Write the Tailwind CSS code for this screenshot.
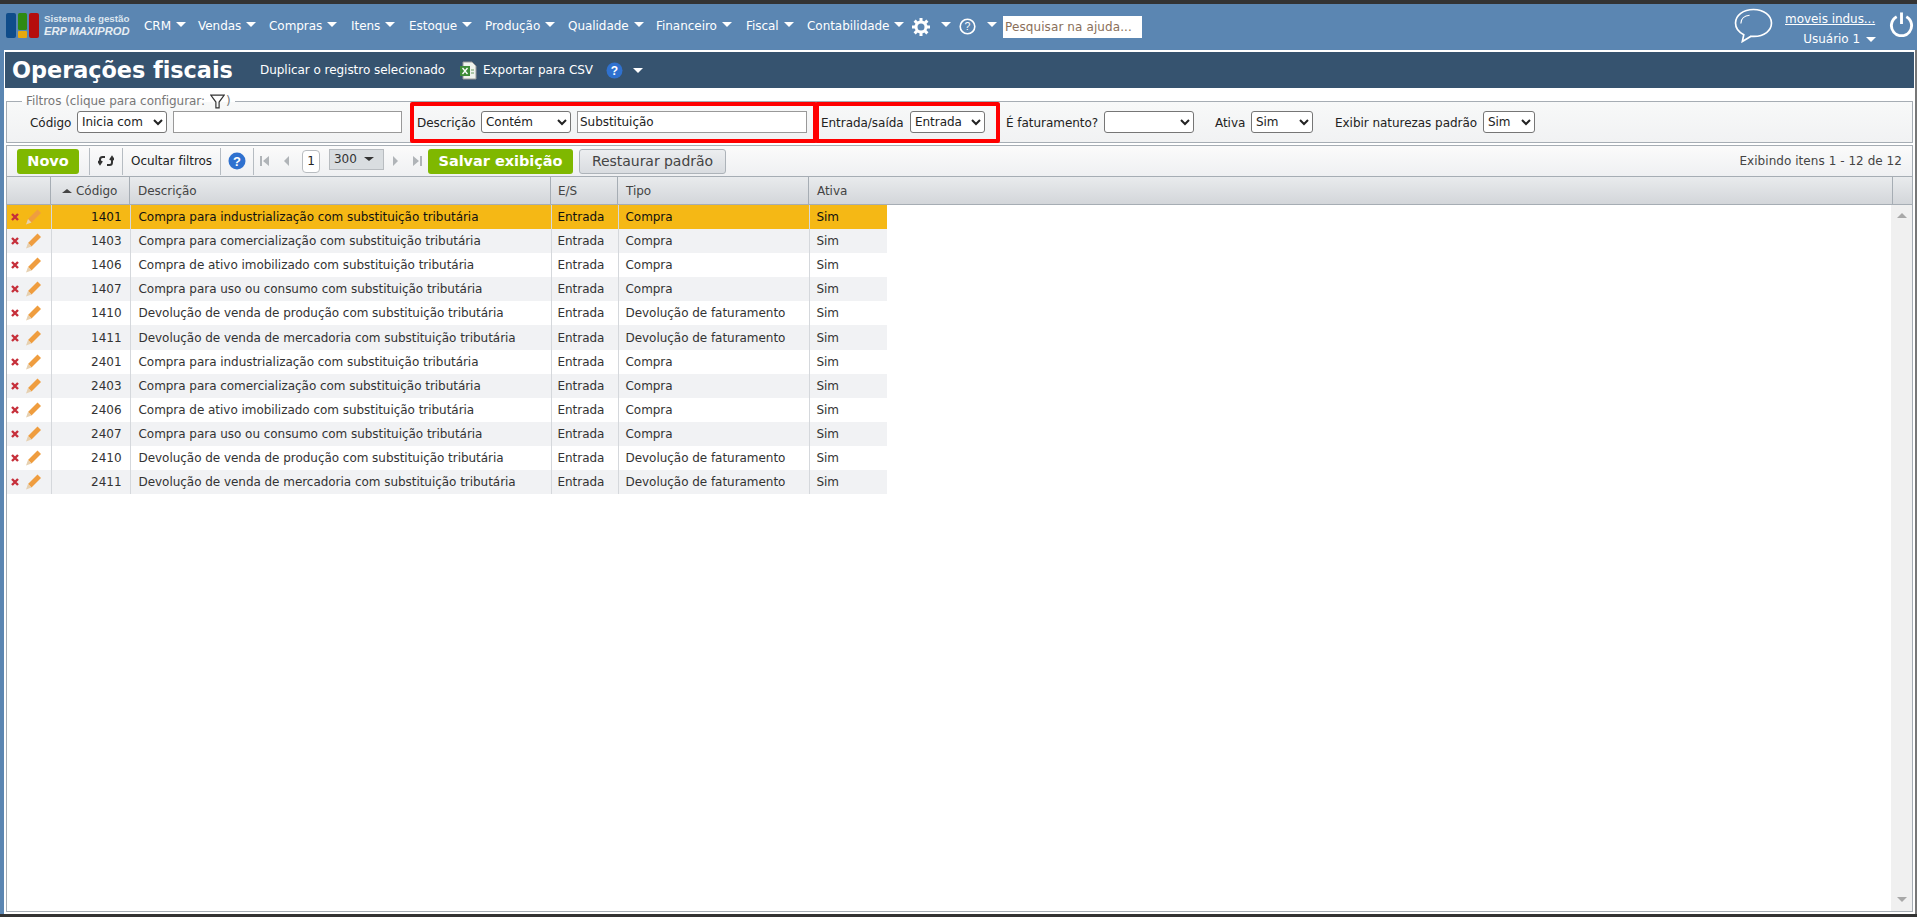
<!DOCTYPE html>
<html lang="pt-BR"><head><meta charset="utf-8"><title>Operações fiscais</title>
<script src="https://cdn.jsdelivr.net/npm/@tailwindcss/browser@4"></script></head>
<body class="w-[1917px] h-[917px] overflow-hidden bg-[#333] font-['DejaVu_Sans',sans-serif] text-[12px] tracking-[-0.04px] text-[#333]">
<div class="h-[4px] bg-[#333]"></div>
<header class="h-[46px] bg-[#5b86b2] flex items-start text-white relative">
  <div class="flex w-[137px] pl-[6px] pt-[9px] h-[46px] shrink-0">
    <svg width="33" height="25" viewBox="0 0 33 25"><rect x="0" y="0" width="10" height="25" rx="2" fill="#0f4c8a"/><rect x="12" y="0" width="9" height="17" rx="1.5" fill="#2f8a12"/><rect x="12" y="18" width="9" height="7" rx="1" fill="#e8a90f"/><rect x="23" y="0" width="10" height="25" rx="2" fill="#b50d0d"/></svg>
    <div class="ml-[5px] leading-none"><div class="text-[9.800px] font-bold text-[#dbe5ee] mt-[1px] whitespace-nowrap font-['Liberation_Sans',sans-serif]">Sistema de gestão</div><div class="text-[11.200px] italic font-bold text-[#e6edf3] mt-[2px] whitespace-nowrap font-['Liberation_Sans',sans-serif]">ERP MAXIPROD</div></div>
  </div>
  <nav class="flex items-center h-[42px] pt-[3px] pl-[7px] whitespace-nowrap">
    <span class="w-[54px] pb-[2px] flex items-center gap-[5px]">CRM<i class="w-0 h-0 mb-[2px] border-x-[5px] border-x-transparent border-t-[5px] border-t-white"></i></span>
    <span class="w-[71px] pb-[2px] flex items-center gap-[5px]">Vendas<i class="w-0 h-0 mb-[2px] border-x-[5px] border-x-transparent border-t-[5px] border-t-white"></i></span>
    <span class="w-[82px] pb-[2px] flex items-center gap-[5px]">Compras<i class="w-0 h-0 mb-[2px] border-x-[5px] border-x-transparent border-t-[5px] border-t-white"></i></span>
    <span class="w-[58px] pb-[2px] flex items-center gap-[5px]">Itens<i class="w-0 h-0 mb-[2px] border-x-[5px] border-x-transparent border-t-[5px] border-t-white"></i></span>
    <span class="w-[76px] pb-[2px] flex items-center gap-[5px]">Estoque<i class="w-0 h-0 mb-[2px] border-x-[5px] border-x-transparent border-t-[5px] border-t-white"></i></span>
    <span class="w-[83px] pb-[2px] flex items-center gap-[5px]">Produção<i class="w-0 h-0 mb-[2px] border-x-[5px] border-x-transparent border-t-[5px] border-t-white"></i></span>
    <span class="w-[88px] pb-[2px] flex items-center gap-[5px]">Qualidade<i class="w-0 h-0 mb-[2px] border-x-[5px] border-x-transparent border-t-[5px] border-t-white"></i></span>
    <span class="w-[90px] pb-[2px] flex items-center gap-[5px]">Financeiro<i class="w-0 h-0 mb-[2px] border-x-[5px] border-x-transparent border-t-[5px] border-t-white"></i></span>
    <span class="w-[61px] pb-[2px] flex items-center gap-[5px]">Fiscal<i class="w-0 h-0 mb-[2px] border-x-[5px] border-x-transparent border-t-[5px] border-t-white"></i></span>
    <span class="w-[105px] pb-[2px] flex items-center gap-[5px]">Contabilidade<i class="w-0 h-0 mb-[2px] border-x-[5px] border-x-transparent border-t-[5px] border-t-white"></i></span>
    <svg class="w-[18px] h-[18px] mr-[11px]" viewBox="0 0 18 18"><circle cx="9" cy="9" r="5" fill="none" stroke="#fff" stroke-width="3"/><path d="M9 0v4M9 14v4M0 9h4M14 9h4M2.600 2.600l2.800 2.800M12.600 12.600l2.800 2.800M2.600 15.400l2.800-2.800M12.600 5.400l2.800-2.800" stroke="#fff" stroke-width="3"/></svg>
    <i class="w-0 h-0 mb-[4px] border-x-[5px] border-x-transparent border-t-[5px] border-t-white mr-[8px]"></i>
    <svg class="w-[17px] h-[17px] mr-[11px]" viewBox="0 0 17 17"><circle cx="8.500" cy="8.500" r="7.300" fill="none" stroke="#fff" stroke-width="1.600"/><text x="8.500" y="12.300" text-anchor="middle" font-size="10.500" fill="#fff" font-family="Liberation Sans">?</text></svg>
    <i class="w-0 h-0 mb-[4px] border-x-[5px] border-x-transparent border-t-[5px] border-t-white mr-[6px]"></i>
    <div class="w-[139px] h-[22px] bg-white text-[#8a6f5a] flex items-center pl-[2px] tracking-[0.1px]">Pesquisar na ajuda...</div>
  </nav>
  <div class="ml-auto flex h-[46px] shrink-0 mr-[3px]">
    <svg class="w-[39px] h-[35px] mt-[4px]" viewBox="0 0 40 36"><path d="M20 1.500C9.500 1.500 1.500 7.500 1.500 15.500c0 5.500 3.500 9.500 8.500 12l-1.500 7 9-5.500c1 .2 2 .2 3 .2 10.500 0 18-6 18-13.700S30.500 1.500 20 1.500z" fill="none" stroke="#fff" stroke-width="1.700"/><path d="M7 16c0-5 4-8 9-8.500" fill="none" stroke="#fff" stroke-width="1.200"/></svg>
    <div class="ml-[12px] w-[104px] pr-[13px]"><div class="underline mt-[6px] whitespace-nowrap">moveis indus...</div><div class="mt-[2px] flex items-center justify-end gap-[6px] whitespace-nowrap">Usuário 1<i class="w-0 h-0 border-x-[5px] border-x-transparent border-t-[5px] border-t-white"></i></div></div>
    <svg class="w-[25px] h-[26px] mt-[7px]" viewBox="0 0 26 26"><path d="M8 5.500a10.500 10.500 0 1 0 10 0" fill="none" stroke="#fff" stroke-width="3"/><path d="M13 1v12" stroke="#fff" stroke-width="3"/></svg>
  </div>
</header>
<div class="flex h-[864px] bg-[#5b86b2]">
<main class="w-[1911px] ml-[4px] bg-white flex flex-col relative">
  <div class="h-[2px]"></div>
  <div class="h-[36px] ml-[1px] w-[1909px] bg-[#36536f] text-white flex items-center shrink-0">
    <h1 class="text-[22.400px] font-bold leading-none ml-[7px] w-[248px] whitespace-nowrap">Operações fiscais</h1>
    <span class="whitespace-nowrap w-[200px] pb-[1px]">Duplicar o registro selecionado</span>
    <svg class="w-[17px] h-[19px]" viewBox="0 0 17 19"><path d="M3 1h9l4 4v13H3z" fill="#eef2ec" stroke="#999"/><rect x="0" y="5" width="10" height="10" fill="#3d8b37"/><path d="M2.500 7l5 6M7.500 7l-5 6" stroke="#fff" stroke-width="1.300"/><path d="M11 9h3M11 12h3" stroke="#6a9c63"/></svg>
    <span class="ml-[6px] whitespace-nowrap w-[123px]">Exportar para CSV</span>
    <svg class="w-[17px] h-[17px]" viewBox="0 0 17 17"><circle cx="8.500" cy="8.500" r="8" fill="#2f71cf"/><text x="8.500" y="12.700" text-anchor="middle" font-size="12" font-weight="700" fill="#fff" font-family="Liberation Sans">?</text></svg>
    <i class="ml-[10px] w-0 h-0 border-x-[5px] border-x-transparent border-t-[5px] border-t-white"></i>
  </div>
  <fieldset class="mt-[6px] ml-[2px] w-[1907px] h-[49px] border border-[#a6adb4] bg-gradient-to-b from-[#f8f9f9] to-[#f1f2f3] shrink-0 px-0">
    <legend class="ml-[15px] px-[4px] text-[#777] h-[14px] leading-[14px] flex items-center whitespace-nowrap">Filtros (clique para configurar:<svg class="w-[15px] h-[15px] ml-[5px] mr-[1px]" viewBox="0 0 14 14"><path d="M.7 1h12.600L8.500 7.500V13H5.500V7.500z" fill="none" stroke="#333" stroke-width="1.100"/></svg>)</legend>
    <div class="flex items-center h-[22px] mt-[3px] text-[#222] whitespace-nowrap">
      <span class="ml-[23px] w-[47px] pt-[2px]">Código</span>
      <select class="w-[90px] h-[22px] border border-[#767676] rounded-[3px] bg-white"><option>Inicia com</option></select>
      <input class="ml-[6px] w-[229px] h-[22px] border border-[#999] bg-white" value="">
      <span class="ml-[15px] w-[64px] pt-[2px]">Descrição</span>
      <select class="w-[90px] h-[22px] border border-[#767676] rounded-[3px] bg-white"><option>Contém</option></select>
      <input class="ml-[6px] w-[230px] h-[22px] border border-[#999] bg-white pl-[2px] text-[#222]" value="Substituição">
      <span class="ml-[14px] w-[89px] pt-[2px]">Entrada/saída</span>
      <select class="w-[75px] h-[22px] border border-[#767676] rounded-[3px] bg-white"><option>Entrada</option></select>
      <span class="ml-[21px] w-[98px] pt-[2px]">É faturamento?</span>
      <select class="w-[90px] h-[22px] border border-[#767676] rounded-[3px] bg-white"><option></option></select>
      <span class="ml-[21px] w-[36px] pt-[2px]">Ativa</span>
      <select class="w-[62px] h-[22px] border border-[#767676] rounded-[3px] bg-white"><option>Sim</option></select>
      <span class="ml-[22px] w-[148px] pt-[2px]">Exibir naturezas padrão</span>
      <select class="w-[52px] h-[22px] border border-[#767676] rounded-[3px] bg-white"><option>Sim</option></select>
    </div>
  </fieldset>
  <div class="absolute left-[406px] top-[52px] w-[407px] h-[41px] border-[4px] border-[#ff0000] rounded-[2px]"></div>
  <div class="absolute left-[811px] top-[52px] w-[185px] h-[41px] border-[4px] border-[#ff0000] rounded-[2px]"></div>
  <section class="mt-[2px] ml-[2px] w-[1907px] h-[767px] border border-[#a6adb4] flex flex-col shrink-0">
    <div class="h-[31px] bg-gradient-to-b from-[#fbfbfb] to-[#eff0f2] flex items-center shrink-0 border-b border-[#a6adb4] relative whitespace-nowrap">
      <button class="ml-[10px] w-[62px] h-[25px] rounded-[3px] bg-[#7fb800] text-white font-bold text-[14.500px] leading-none">Novo</button>
      <i class="ml-[10px] w-px h-[27px] bg-[#b6bcc2]"></i>
      <svg class="ml-[8px] w-[16px] h-[14px]" viewBox="0 0 16 14"><path d="M7 3H4.500C3 3 2 4 2 5.500V9M0 7l2 3 2-3M9 11h2.500C13 11 14 10 14 8.500V4M12 6l2-3 2 3" fill="none" stroke="#333" stroke-width="2"/></svg>
      <i class="ml-[8px] w-px h-[27px] bg-[#b6bcc2]"></i>
      <span class="ml-[8px] w-[89px] text-[#222]">Ocultar filtros</span>
      <i class="w-px h-[27px] bg-[#b6bcc2]"></i>
      <svg class="ml-[7px] w-[18px] h-[18px]" viewBox="0 0 18 18"><circle cx="9" cy="9" r="8.500" fill="#2f71cf"/><text x="9" y="13.500" text-anchor="middle" font-size="13" font-weight="700" fill="#fff" font-family="Liberation Sans">?</text></svg>
      <i class="ml-[7px] w-px h-[27px] bg-[#b6bcc2]"></i>
      <svg class="ml-[6px] w-[9px] h-[10px]" viewBox="0 0 9 10"><path d="M0 0h2v10H0zM9 0v10L3 5z" fill="#b0b4b8"/></svg>
      <svg class="ml-[15px] w-[5px] h-[10px]" viewBox="0 0 5 10"><path d="M5 0v10L0 5z" fill="#b0b4b8"/></svg>
      <span class="ml-[13px] w-[18px] h-[23px] border border-[#b8bcc0] rounded-[4px] bg-white flex items-center justify-center text-[#222]">1</span>
      <div class="ml-[9px] w-[55px] h-[21px] mb-[4px] bg-[#d9dde0] border border-[#b8bcc0] flex items-center justify-between pl-[4px] pr-[9px] text-[#333]">300<i class="w-0 h-0 border-x-[5px] border-x-transparent border-t-[4px] border-t-[#333]"></i></div>
      <svg class="ml-[9px] w-[5px] h-[10px]" viewBox="0 0 5 10"><path d="M0 0v10l5-5z" fill="#b0b4b8"/></svg>
      <svg class="ml-[15px] w-[9px] h-[10px]" viewBox="0 0 9 10"><path d="M7 0h2v10H7zM0 0v10l6-5z" fill="#b0b4b8"/></svg>
      <button class="ml-[6px] w-[145px] h-[25px] rounded-[3px] bg-[#7fb800] text-white font-bold text-[14.500px] leading-none">Salvar exibição</button>
      <button class="ml-[6px] w-[147px] h-[25px] rounded-[3px] border border-[#adb3b9] bg-gradient-to-b from-[#eceef0] to-[#d9dce0] text-[#444] text-[14px] leading-none">Restaurar padrão</button>
      <span class="ml-auto mr-[10px] text-[#444] tracking-[0.05px]">Exibindo itens 1 - 12 de 12</span>
    </div>
    <div class="h-[28px] bg-gradient-to-b from-[#e9ebed] to-[#d3d6da] flex text-[#444] shrink-0 border-b border-[#a6adb4] leading-[28px]">
      <div class="w-[44px] border-r border-[#a6adb4]"></div>
      <div class="w-[79px] border-r border-[#a6adb4] flex items-center pl-[11px]"><i class="w-0 h-0 border-x-[5px] border-x-transparent border-b-[4px] border-b-[#444] mr-[4px]"></i>Código</div>
      <div class="w-[421px] border-r border-[#a6adb4] pl-[8px]">Descrição</div>
      <div class="w-[67px] border-r border-[#a6adb4] pl-[7px]">E/S</div>
      <div class="w-[191px] border-r border-[#a6adb4] pl-[8px]">Tipo</div>
      <div class="w-[1084px] border-r border-[#a6adb4] pl-[8px]">Ativa</div>
    </div>
    <div class="flex flex-1 min-h-0">
      <table class="w-[880px] h-fit table-fixed border-collapse self-start text-[#333] whitespace-nowrap">
        <colgroup><col class="w-[44px]"><col class="w-[79px]"><col class="w-[421px]"><col class="w-[67px]"><col class="w-[191px]"><col class="w-[78px]"></colgroup>
        <tbody>
          <tr class="h-[24.100px] bg-[#f5b815] text-[#111]"><td class="border-r border-[#d5d8dc]"><div class="flex items-center pl-[4px] gap-[7px]"><svg class="w-[8px] h-[8px]" viewBox="0 0 8 8"><path d="M1 1l6 6M7 1L1 7" stroke="#c62f3a" stroke-width="2.400"/></svg><svg class="w-[15px] h-[16px]" viewBox="0 0 15 16"><path d="M11.500.5l3.500 3.500-9.500 9.500L2 10z" fill="#ef9d3f"/><path d="M2 10l3.500 3.500L0 15.500z" fill="#e6d0b0"/></svg></div></td><td class="border-r border-[#d5d8dc] text-right pr-[8px]">1401</td><td class="border-r border-[#d5d8dc] pl-[8px]">Compra para industrialização com substituição tributária</td><td class="border-r border-[#d5d8dc] pl-[6px]">Entrada</td><td class="border-r border-[#d5d8dc] pl-[7px]">Compra</td><td class="pl-[7px]">Sim</td></tr>
          <tr class="h-[24.100px] bg-[#f1f2f4]"><td class="border-r border-[#d5d8dc]"><div class="flex items-center pl-[4px] gap-[7px]"><svg class="w-[8px] h-[8px]" viewBox="0 0 8 8"><path d="M1 1l6 6M7 1L1 7" stroke="#c62f3a" stroke-width="2.400"/></svg><svg class="w-[15px] h-[16px]" viewBox="0 0 15 16"><path d="M11.500.5l3.500 3.500-9.500 9.500L2 10z" fill="#ef9d3f"/><path d="M2 10l3.500 3.500L0 15.500z" fill="#e6d0b0"/></svg></div></td><td class="border-r border-[#d5d8dc] text-right pr-[8px]">1403</td><td class="border-r border-[#d5d8dc] pl-[8px]">Compra para comercialização com substituição tributária</td><td class="border-r border-[#d5d8dc] pl-[6px]">Entrada</td><td class="border-r border-[#d5d8dc] pl-[7px]">Compra</td><td class="pl-[7px]">Sim</td></tr>
          <tr class="h-[24.100px] bg-white"><td class="border-r border-[#d5d8dc]"><div class="flex items-center pl-[4px] gap-[7px]"><svg class="w-[8px] h-[8px]" viewBox="0 0 8 8"><path d="M1 1l6 6M7 1L1 7" stroke="#c62f3a" stroke-width="2.400"/></svg><svg class="w-[15px] h-[16px]" viewBox="0 0 15 16"><path d="M11.500.5l3.500 3.500-9.500 9.500L2 10z" fill="#ef9d3f"/><path d="M2 10l3.500 3.500L0 15.500z" fill="#e6d0b0"/></svg></div></td><td class="border-r border-[#d5d8dc] text-right pr-[8px]">1406</td><td class="border-r border-[#d5d8dc] pl-[8px]">Compra de ativo imobilizado com substituição tributária</td><td class="border-r border-[#d5d8dc] pl-[6px]">Entrada</td><td class="border-r border-[#d5d8dc] pl-[7px]">Compra</td><td class="pl-[7px]">Sim</td></tr>
          <tr class="h-[24.100px] bg-[#f1f2f4]"><td class="border-r border-[#d5d8dc]"><div class="flex items-center pl-[4px] gap-[7px]"><svg class="w-[8px] h-[8px]" viewBox="0 0 8 8"><path d="M1 1l6 6M7 1L1 7" stroke="#c62f3a" stroke-width="2.400"/></svg><svg class="w-[15px] h-[16px]" viewBox="0 0 15 16"><path d="M11.500.5l3.500 3.500-9.500 9.500L2 10z" fill="#ef9d3f"/><path d="M2 10l3.500 3.500L0 15.500z" fill="#e6d0b0"/></svg></div></td><td class="border-r border-[#d5d8dc] text-right pr-[8px]">1407</td><td class="border-r border-[#d5d8dc] pl-[8px]">Compra para uso ou consumo com substituição tributária</td><td class="border-r border-[#d5d8dc] pl-[6px]">Entrada</td><td class="border-r border-[#d5d8dc] pl-[7px]">Compra</td><td class="pl-[7px]">Sim</td></tr>
          <tr class="h-[24.100px] bg-white"><td class="border-r border-[#d5d8dc]"><div class="flex items-center pl-[4px] gap-[7px]"><svg class="w-[8px] h-[8px]" viewBox="0 0 8 8"><path d="M1 1l6 6M7 1L1 7" stroke="#c62f3a" stroke-width="2.400"/></svg><svg class="w-[15px] h-[16px]" viewBox="0 0 15 16"><path d="M11.500.5l3.500 3.500-9.500 9.500L2 10z" fill="#ef9d3f"/><path d="M2 10l3.500 3.500L0 15.500z" fill="#e6d0b0"/></svg></div></td><td class="border-r border-[#d5d8dc] text-right pr-[8px]">1410</td><td class="border-r border-[#d5d8dc] pl-[8px]">Devolução de venda de produção com substituição tributária</td><td class="border-r border-[#d5d8dc] pl-[6px]">Entrada</td><td class="border-r border-[#d5d8dc] pl-[7px]">Devolução de faturamento</td><td class="pl-[7px]">Sim</td></tr>
          <tr class="h-[24.100px] bg-[#f1f2f4]"><td class="border-r border-[#d5d8dc]"><div class="flex items-center pl-[4px] gap-[7px]"><svg class="w-[8px] h-[8px]" viewBox="0 0 8 8"><path d="M1 1l6 6M7 1L1 7" stroke="#c62f3a" stroke-width="2.400"/></svg><svg class="w-[15px] h-[16px]" viewBox="0 0 15 16"><path d="M11.500.5l3.500 3.500-9.500 9.500L2 10z" fill="#ef9d3f"/><path d="M2 10l3.500 3.500L0 15.500z" fill="#e6d0b0"/></svg></div></td><td class="border-r border-[#d5d8dc] text-right pr-[8px]">1411</td><td class="border-r border-[#d5d8dc] pl-[8px]">Devolução de venda de mercadoria com substituição tributária</td><td class="border-r border-[#d5d8dc] pl-[6px]">Entrada</td><td class="border-r border-[#d5d8dc] pl-[7px]">Devolução de faturamento</td><td class="pl-[7px]">Sim</td></tr>
          <tr class="h-[24.100px] bg-white"><td class="border-r border-[#d5d8dc]"><div class="flex items-center pl-[4px] gap-[7px]"><svg class="w-[8px] h-[8px]" viewBox="0 0 8 8"><path d="M1 1l6 6M7 1L1 7" stroke="#c62f3a" stroke-width="2.400"/></svg><svg class="w-[15px] h-[16px]" viewBox="0 0 15 16"><path d="M11.500.5l3.500 3.500-9.500 9.500L2 10z" fill="#ef9d3f"/><path d="M2 10l3.500 3.500L0 15.500z" fill="#e6d0b0"/></svg></div></td><td class="border-r border-[#d5d8dc] text-right pr-[8px]">2401</td><td class="border-r border-[#d5d8dc] pl-[8px]">Compra para industrialização com substituição tributária</td><td class="border-r border-[#d5d8dc] pl-[6px]">Entrada</td><td class="border-r border-[#d5d8dc] pl-[7px]">Compra</td><td class="pl-[7px]">Sim</td></tr>
          <tr class="h-[24.100px] bg-[#f1f2f4]"><td class="border-r border-[#d5d8dc]"><div class="flex items-center pl-[4px] gap-[7px]"><svg class="w-[8px] h-[8px]" viewBox="0 0 8 8"><path d="M1 1l6 6M7 1L1 7" stroke="#c62f3a" stroke-width="2.400"/></svg><svg class="w-[15px] h-[16px]" viewBox="0 0 15 16"><path d="M11.500.5l3.500 3.500-9.500 9.500L2 10z" fill="#ef9d3f"/><path d="M2 10l3.500 3.500L0 15.500z" fill="#e6d0b0"/></svg></div></td><td class="border-r border-[#d5d8dc] text-right pr-[8px]">2403</td><td class="border-r border-[#d5d8dc] pl-[8px]">Compra para comercialização com substituição tributária</td><td class="border-r border-[#d5d8dc] pl-[6px]">Entrada</td><td class="border-r border-[#d5d8dc] pl-[7px]">Compra</td><td class="pl-[7px]">Sim</td></tr>
          <tr class="h-[24.100px] bg-white"><td class="border-r border-[#d5d8dc]"><div class="flex items-center pl-[4px] gap-[7px]"><svg class="w-[8px] h-[8px]" viewBox="0 0 8 8"><path d="M1 1l6 6M7 1L1 7" stroke="#c62f3a" stroke-width="2.400"/></svg><svg class="w-[15px] h-[16px]" viewBox="0 0 15 16"><path d="M11.500.5l3.500 3.500-9.500 9.500L2 10z" fill="#ef9d3f"/><path d="M2 10l3.500 3.500L0 15.500z" fill="#e6d0b0"/></svg></div></td><td class="border-r border-[#d5d8dc] text-right pr-[8px]">2406</td><td class="border-r border-[#d5d8dc] pl-[8px]">Compra de ativo imobilizado com substituição tributária</td><td class="border-r border-[#d5d8dc] pl-[6px]">Entrada</td><td class="border-r border-[#d5d8dc] pl-[7px]">Compra</td><td class="pl-[7px]">Sim</td></tr>
          <tr class="h-[24.100px] bg-[#f1f2f4]"><td class="border-r border-[#d5d8dc]"><div class="flex items-center pl-[4px] gap-[7px]"><svg class="w-[8px] h-[8px]" viewBox="0 0 8 8"><path d="M1 1l6 6M7 1L1 7" stroke="#c62f3a" stroke-width="2.400"/></svg><svg class="w-[15px] h-[16px]" viewBox="0 0 15 16"><path d="M11.500.5l3.500 3.500-9.500 9.500L2 10z" fill="#ef9d3f"/><path d="M2 10l3.500 3.500L0 15.500z" fill="#e6d0b0"/></svg></div></td><td class="border-r border-[#d5d8dc] text-right pr-[8px]">2407</td><td class="border-r border-[#d5d8dc] pl-[8px]">Compra para uso ou consumo com substituição tributária</td><td class="border-r border-[#d5d8dc] pl-[6px]">Entrada</td><td class="border-r border-[#d5d8dc] pl-[7px]">Compra</td><td class="pl-[7px]">Sim</td></tr>
          <tr class="h-[24.100px] bg-white"><td class="border-r border-[#d5d8dc]"><div class="flex items-center pl-[4px] gap-[7px]"><svg class="w-[8px] h-[8px]" viewBox="0 0 8 8"><path d="M1 1l6 6M7 1L1 7" stroke="#c62f3a" stroke-width="2.400"/></svg><svg class="w-[15px] h-[16px]" viewBox="0 0 15 16"><path d="M11.500.5l3.500 3.500-9.500 9.500L2 10z" fill="#ef9d3f"/><path d="M2 10l3.500 3.500L0 15.500z" fill="#e6d0b0"/></svg></div></td><td class="border-r border-[#d5d8dc] text-right pr-[8px]">2410</td><td class="border-r border-[#d5d8dc] pl-[8px]">Devolução de venda de produção com substituição tributária</td><td class="border-r border-[#d5d8dc] pl-[6px]">Entrada</td><td class="border-r border-[#d5d8dc] pl-[7px]">Devolução de faturamento</td><td class="pl-[7px]">Sim</td></tr>
          <tr class="h-[24.100px] bg-[#f1f2f4]"><td class="border-r border-[#d5d8dc]"><div class="flex items-center pl-[4px] gap-[7px]"><svg class="w-[8px] h-[8px]" viewBox="0 0 8 8"><path d="M1 1l6 6M7 1L1 7" stroke="#c62f3a" stroke-width="2.400"/></svg><svg class="w-[15px] h-[16px]" viewBox="0 0 15 16"><path d="M11.500.5l3.500 3.500-9.500 9.500L2 10z" fill="#ef9d3f"/><path d="M2 10l3.500 3.500L0 15.500z" fill="#e6d0b0"/></svg></div></td><td class="border-r border-[#d5d8dc] text-right pr-[8px]">2411</td><td class="border-r border-[#d5d8dc] pl-[8px]">Devolução de venda de mercadoria com substituição tributária</td><td class="border-r border-[#d5d8dc] pl-[6px]">Entrada</td><td class="border-r border-[#d5d8dc] pl-[7px]">Devolução de faturamento</td><td class="pl-[7px]">Sim</td></tr>
        </tbody>
      </table>
      <div class="ml-auto w-[21px] bg-[#f0f0f0] flex flex-col justify-between items-center pt-[8px] pb-[9px]"><i class="w-0 h-0 border-x-[5px] border-x-transparent border-b-[5px] border-b-[#a8a8a8]"></i><i class="w-0 h-0 border-x-[5px] border-x-transparent border-t-[5px] border-t-[#a8a8a8]"></i></div>
    </div>
  </section>
</main>
<div class="w-[2px] bg-[#777]"></div>
</div>
<div class="h-[3px] bg-[#333]"></div>
</body></html>
